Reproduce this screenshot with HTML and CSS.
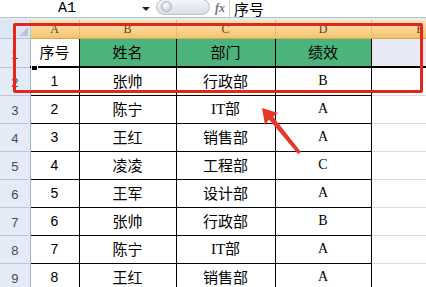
FILE: index.html
```html
<!DOCTYPE html>
<html lang="zh">
<head>
    <meta charset="UTF-8">
    <title>绩效表</title>
    <link rel="stylesheet" href="styles.css">
</head>
<body>

    <div class="formula-bar">
        <div class="name-box">A1</div>
        <span class="drop"></span>
        <div class="pill"><span class="knob"></span></div>
        <span class="fx">fx</span>
        <div class="formula">序号</div>
    </div>
    <div class="strip"></div>

    <table class="sheet">
        <colgroup>
            <col style="width:30px">
            <col style="width:49px">
            <col style="width:97px">
            <col style="width:99px">
            <col style="width:96px">
            <col style="width:55px">
        </colgroup>
        <tr class="col-head">
            <th class="corner"></th>
            <th>A</th><th>B</th><th>C</th><th>D</th><th class="e">E</th>
        </tr>
        <tr class="title-row">
            <td class="rh">1</td>
            <td class="cell active">序号</td>
            <td class="cell green">姓名</td>
            <td class="cell green">部门</td>
            <td class="cell green">绩效</td>
            <td class="empty sel"></td>
        </tr>
        <tr>
            <td class="rh">2</td>
            <td class="cell num">1</td><td class="cell">张帅</td><td class="cell">行政部</td><td class="cell grade">B</td><td class="empty"></td>
        </tr>
        <tr>
            <td class="rh">3</td>
            <td class="cell num">2</td><td class="cell">陈宁</td><td class="cell dept">IT部</td><td class="cell grade">A</td><td class="empty"></td>
        </tr>
        <tr>
            <td class="rh">4</td>
            <td class="cell num">3</td><td class="cell">王红</td><td class="cell">销售部</td><td class="cell grade">A</td><td class="empty"></td>
        </tr>
        <tr>
            <td class="rh">5</td>
            <td class="cell num">4</td><td class="cell">凌凌</td><td class="cell">工程部</td><td class="cell grade">C</td><td class="empty"></td>
        </tr>
        <tr>
            <td class="rh">6</td>
            <td class="cell num">5</td><td class="cell">王军</td><td class="cell">设计部</td><td class="cell grade">A</td><td class="empty"></td>
        </tr>
        <tr>
            <td class="rh">7</td>
            <td class="cell num">6</td><td class="cell">张帅</td><td class="cell">行政部</td><td class="cell grade">B</td><td class="empty"></td>
        </tr>
        <tr>
            <td class="rh">8</td>
            <td class="cell num">7</td><td class="cell">陈宁</td><td class="cell dept">IT部</td><td class="cell grade">A</td><td class="empty"></td>
        </tr>
        <tr>
            <td class="rh">9</td>
            <td class="cell num">8</td><td class="cell">王红</td><td class="cell">销售部</td><td class="cell grade">A</td><td class="empty"></td>
        </tr>
    </table>

    <!-- fill handle + annotation -->
    <div class="handle"></div>
    <div class="red-box"></div>
    <svg class="arrow" width="426" height="287" viewBox="0 0 426 287">
        <polygon points="262,108 278,113 273,116.5 301,152 298,154 269,119.5 265,125" fill="#e8362a"/>
    </svg>

</body>
</html>
```

FILE: styles.css
```css
body {
    margin: 0;
    width: 426px;
    height: 287px;
    overflow: hidden;
    position: relative;
    background: #fff;
    font-family: "Noto Sans CJK SC", sans-serif;
    color: #000;
}

/* barre de formule */
.formula-bar {
    display: flex;
    align-items: center;
    height: 17px;
    border-bottom: 1px solid #b7c2d0;
    background: #fff;
}

.name-box {
    width: 134px;
    text-align: center;
    font-family: "Liberation Mono", monospace;
    font-size: 15px;
    line-height: 17px;
}

.drop {
    width: 0;
    height: 0;
    border-left: 4px solid transparent;
    border-right: 4px solid transparent;
    border-top: 4px solid #222;
    margin-left: 8px;
}

.pill {
    width: 52px;
    height: 14px;
    margin-left: 6px;
    margin-top: -4px;
    border-radius: 8px;
    background: linear-gradient(#f4f6f9, #d9dee6);
    border: 1px solid #b9c1cc;
    display: flex;
    align-items: center;
}

.knob {
    width: 9px;
    height: 9px;
    margin-left: 4px;
    border-radius: 50%;
    background: radial-gradient(circle at 40% 35%, #fff, #b8c2cf);
    border: 1px solid #a9b3c0;
}

.fx {
    width: 18px;
    margin-left: 1px;
    font-family: "Liberation Serif", serif;
    font-style: italic;
    font-weight: bold;
    font-size: 12px;
    color: #6d7684;
    border-right: 1px solid #c9d0da;
    height: 17px;
    line-height: 16px;
    text-align: center;
}

.formula {
    padding-left: 4px;
    font-size: 15px;
    line-height: 17px;
}

.strip {
    height: 2px;
    background: #e6ebf2;
}

/* feuille */
.sheet {
    border-collapse: collapse;
    table-layout: fixed;
    width: 426px;
}

.sheet tr {
    height: 28px;
}

.sheet .col-head {
    height: 18px;
}

.sheet .title-row {
    height: 29px;
}

.col-head th {
    height: 17px;
    padding: 0;
    line-height: 14px;
    font-family: "Liberation Serif", serif;
    font-weight: normal;
    font-size: 12px;
    color: #54432a;
    background: linear-gradient(#fde7bb, #f3c36c);
    border-right: 1px solid #e9ba6a;
    border-bottom: 1px solid #d4a85a;
}

.col-head .corner {
    background: #dde6f3;
    border-right: 1px solid #b3c3d8;
    border-bottom: 1px solid #b3c3d8;
    position: relative;
}

.col-head .corner::after {
    content: "";
    position: absolute;
    right: 2px;
    bottom: 2px;
    border-left: 9px solid transparent;
    border-bottom: 9px solid #b8c6d9;
}

.col-head .e {
    text-align: right;
    padding-right: 2px;
}

.rh {
    padding: 3px 0 0;
    text-align: center;
    font-family: "Liberation Sans", sans-serif;
    font-size: 13px;
    color: #3e4d64;
    background: #e4ebf6;
    border-bottom: 1px solid #b6c6db;
    border-right: 1px solid #9fb3cd;
}

.cell {
    padding: 0;
    text-align: center;
    font-size: 15px;
    line-height: 18px;
    border: 1px solid #000;
}

.cell.num {
    font-family: "Liberation Sans", sans-serif;
    font-size: 14px;
}

.cell.grade {
    font-family: "Liberation Serif", serif;
    font-size: 14px;
}

.cell.dept {
    font-family: "Liberation Serif", "Noto Sans CJK SC", serif;
}

.cell.green {
    background: #4cb47b;
}

.title-row .cell,
.title-row .empty {
    border-bottom: 2px solid #000;
}

.empty {
    padding: 0;
    border-bottom: 1px solid #d5dbe5;
}

.empty.sel {
    background: #e7e9f4;
}

.handle {
    position: absolute;
    left: 31px;
    top: 65px;
    width: 5px;
    height: 4px;
    background: #000;
    border: 1px solid #fff;
}

.red-box {
    position: absolute;
    left: 13px;
    top: 23px;
    width: 404px;
    height: 64px;
    border: 3px solid #e3261b;
    border-radius: 2px;
}

.arrow {
    position: absolute;
    left: 0;
    top: 0;
    pointer-events: none;
}
```
